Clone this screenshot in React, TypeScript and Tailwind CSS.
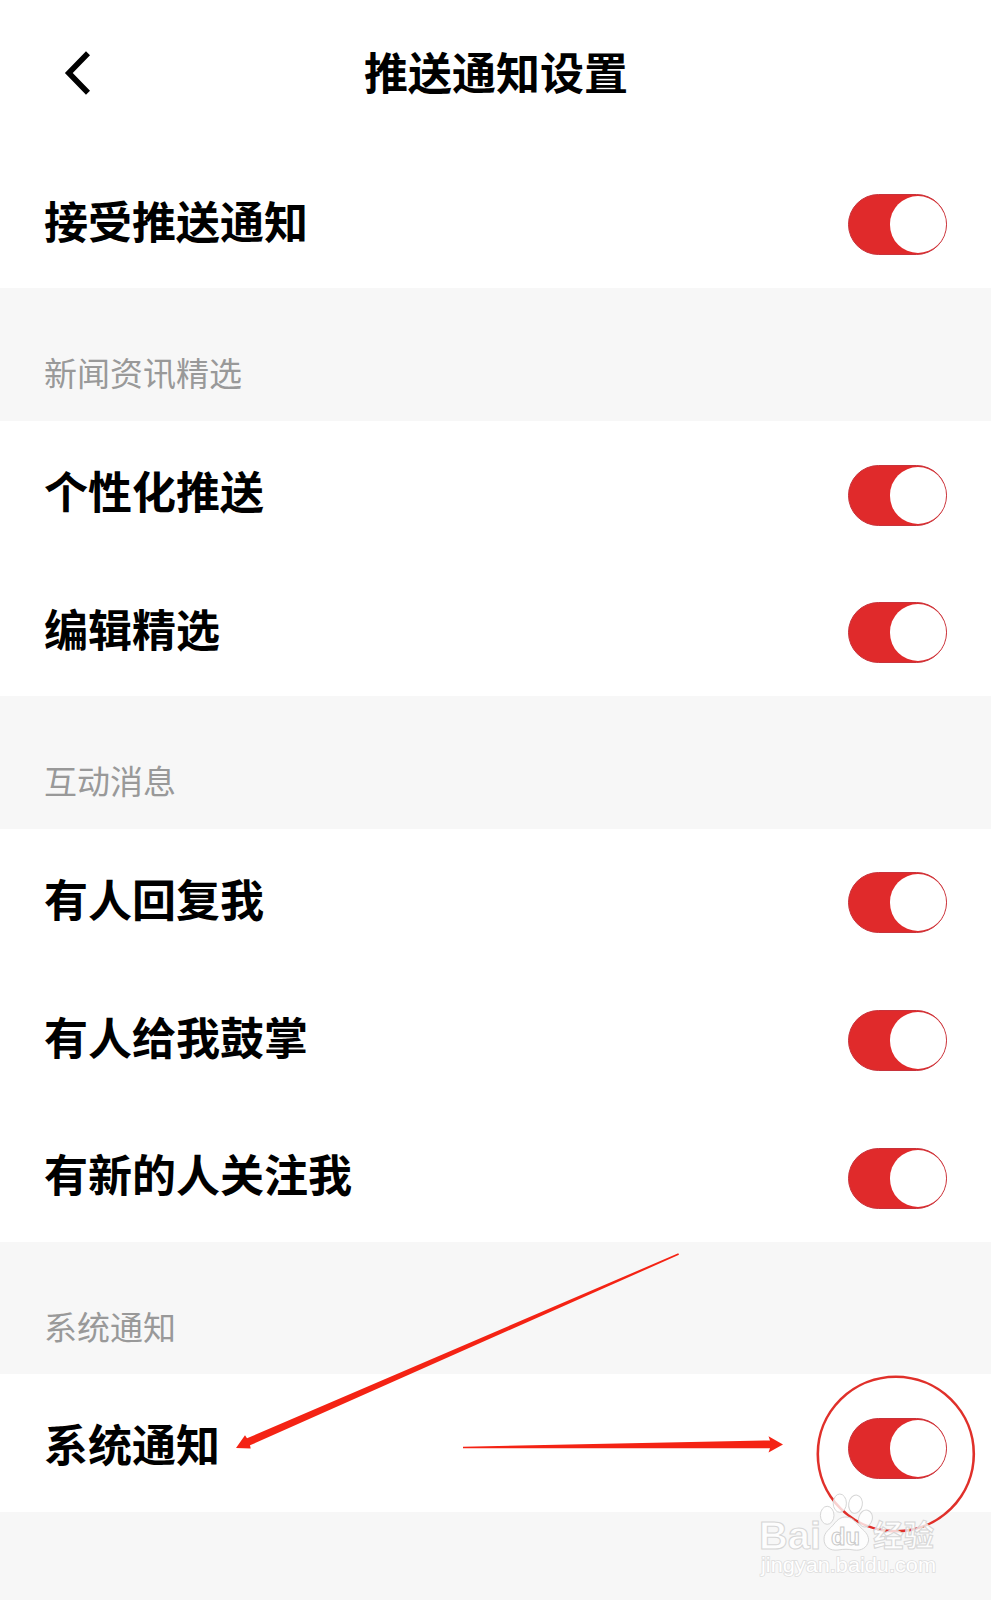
const sections = [
  { title: "新闻资讯精选", items: ["个性化推送", "编辑精选"] },
  { title: "互动消息", items: ["有人回复我", "有人给我鼓掌", "有新的人关注我"] },
  { title: "系统通知", items: ["系统通知"] },
];

function Toggle() {
  return (
    <button
      role="switch"
      aria-checked="true"
      className="mt-[10.6px] flex h-[61px] w-[99px] items-center justify-end rounded-full border border-[#c8333b] bg-[#e02a2b]"
    >
      <span className="h-[57px] w-14 rounded-full bg-white" />
    </button>
  );
}

function SettingRow({ label }: { label: string }) {
  return (
    <div className="flex h-[137.7px] shrink-0 items-center justify-between bg-white px-11">
      <span className="pt-px text-[44px] leading-[64px] font-bold text-black">{label}</span>
      <Toggle />
    </div>
  );
}

function Annotations() {
  return (
    <svg
      className="pointer-events-none absolute top-0 left-0"
      width="991"
      height="1600"
      viewBox="0 0 991 1600"
      fill="none"
    >
      <g fill="#f42314">
        <path d="M236 1448L245 1435.3L247 1438.3L678.3 1253.3L679 1254.8L250 1445.3L250.7 1448.6Z" />
        <path d="M463 1446.8L770 1440.4L768.5 1436.3L783 1444.5L768.5 1452.6L770 1448.2L463 1448.2Z" />
      </g>
      <ellipse cx="895.8" cy="1454" rx="78" ry="77.2" stroke="#e0302a" strokeWidth="2.6" />
    </svg>
  );
}

function Watermark() {
  return (
    <svg
      className="pointer-events-none absolute top-0 left-0"
      width="991"
      height="1600"
      viewBox="0 0 991 1600"
      fill="white"
      fillOpacity="0.78"
      stroke="#d6d6d6"
      strokeWidth="1"
    >
      <ellipse cx="827.2" cy="1515.3" rx="6.8" ry="9" />
      <ellipse cx="839.8" cy="1503.2" rx="6.6" ry="9.2" />
      <ellipse cx="855.5" cy="1504.2" rx="6.8" ry="9.2" transform="rotate(10 855.5 1504.2)" />
      <ellipse cx="865.5" cy="1518.5" rx="6.8" ry="8.5" transform="rotate(14 865.5 1518.5)" />
      <path d="M846 1517C853 1517 856 1523 861 1528C866 1532 869 1536 868.5 1541C867 1548 861 1551 854 1550C848 1549 844 1549 838 1550C830 1551 824 1547 824 1539C824 1532 830 1529 834 1524C838 1519 841 1517 846 1517Z" />
      <g className="font-['Liberation_Sans','Noto_Sans_CJK_SC',sans-serif]">
        <text x="759" y="1549" fontSize="39" fontWeight="700" textLength="62" lengthAdjust="spacingAndGlyphs">
          Bai
        </text>
        <text x="831" y="1545" fontSize="23" fontWeight="700" stroke="#c9c9c9" textLength="29" lengthAdjust="spacingAndGlyphs">
          du
        </text>
        <text x="873" y="1546" fontSize="30" fontWeight="700" textLength="61" lengthAdjust="spacingAndGlyphs">
          经验
        </text>
        <text
          x="761"
          y="1572"
          fontSize="21"
          fillOpacity="1"
          stroke="#dedede"
          strokeWidth="1.6"
          style={{ paintOrder: "stroke" }}
          textLength="175"
          lengthAdjust="spacingAndGlyphs"
        >
          jingyan.baidu.com
        </text>
      </g>
    </svg>
  );
}

export default function App() {
  return (
    <div
      lang="zh-CN"
      className="relative flex h-[1600px] w-[991px] flex-col overflow-hidden bg-[#f7f7f7] font-['Noto_Sans_CJK_SC',sans-serif]"
    >
      <header className="grid h-[150.8px] shrink-0 grid-cols-[1fr_auto_1fr] items-start bg-white pt-[39px] pr-[61px] pl-[62px]">
        <button aria-label="返回" className="flex h-[68px] items-center">
          <svg width="30" height="46" viewBox="0 0 30 46" fill="none" stroke="black" strokeWidth="5.6">
            <path d="M26 3.3L6.8 23L26 42.7" />
          </svg>
        </button>
        <h1 className="text-[44px] leading-[64px] font-bold text-black">推送通知设置</h1>
      </header>

      <SettingRow label="接受推送通知" />

      {sections.map((section) => (
        <section key={section.title} className="shrink-0">
          <h2 className="h-[132.4px] pt-[60px] pl-11 text-[33px] leading-[48px] text-[#999999]">
            {section.title}
          </h2>
          {section.items.map((item) => (
            <SettingRow key={item} label={item} />
          ))}
        </section>
      ))}

      <Annotations />
      <Watermark />
    </div>
  );
}
